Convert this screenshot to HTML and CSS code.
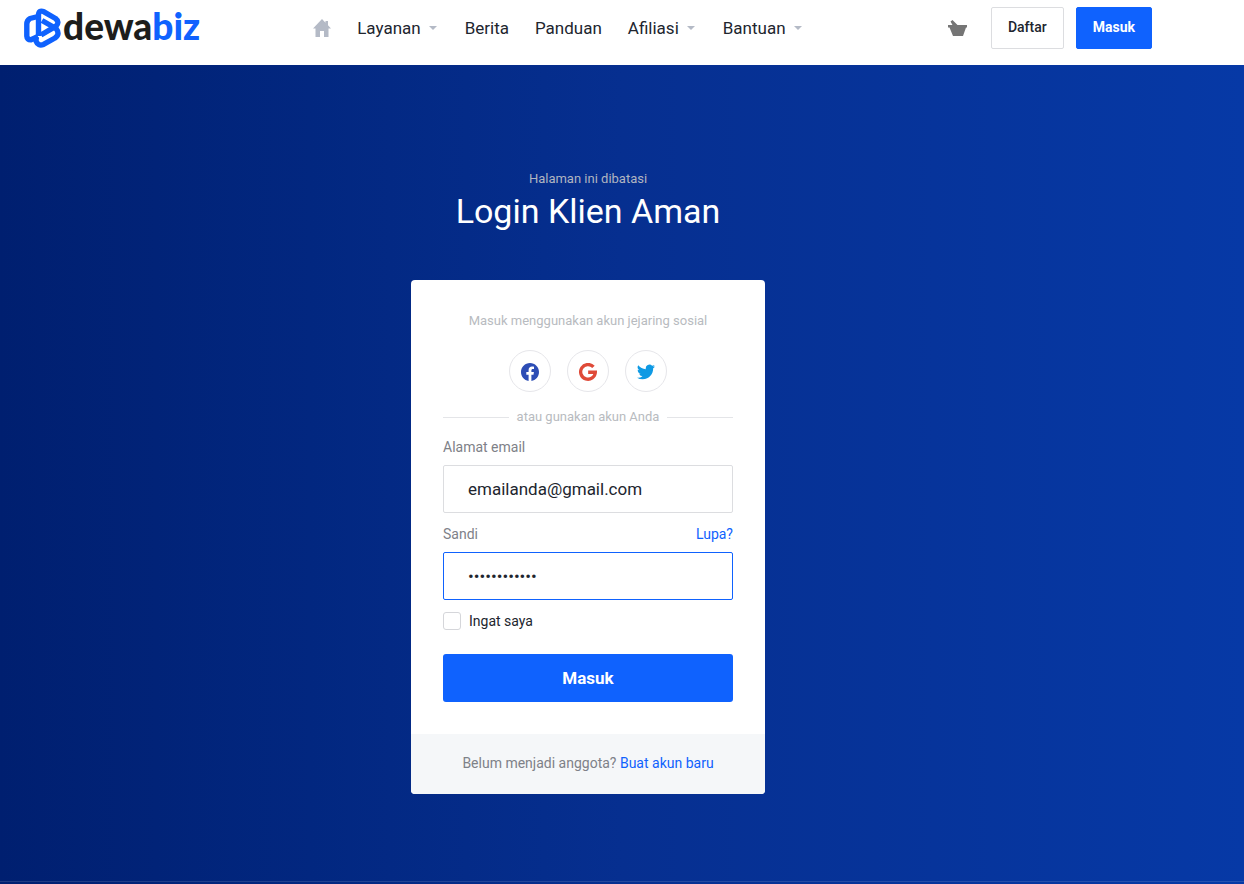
FILE: index.html
```html
<!DOCTYPE html>
<html lang="id">
<head>
<meta charset="utf-8">
<meta name="viewport" content="width=device-width, initial-scale=1">
<title>Login Klien Aman</title>
<link rel="stylesheet" href="styles.css">
</head>
<body>
<header class="header">
  <a class="logo" href="#">
    <svg class="logo-mark" viewBox="0 0 38 40" aria-hidden="true">
      <g fill="none" stroke="#0f62fe" stroke-width="5.400" stroke-linejoin="round">
        <path d="M14.500 28V7.500Q14.500 1.500 20 3.800L31.500 10.500Q36 14 32 18.200L17 27"/>
        <path d="M14 8.500L6 10.500Q2.800 12.500 2.800 16V28Q3 32 7 31.800L14 28.500"/>
        <path d="M12 29V33Q14 38.500 19.500 36.400L31 30Q36.500 26 32 20.500L18 12.500"/>
      </g>
    </svg>
    <span class="logo-text">dewa<span class="logo-accent">biz</span></span>
  </a>
  <nav class="nav">
    <a href="#" aria-label="Beranda"><svg class="home" viewBox="0 0 18 18" aria-hidden="true"><path fill="#b4bac6" d="M9 0L0 9.500h2.500V18h4.500v-6h4v6h4.500V9.500H18L15 6.300V2h-2.500v1.700z"/></svg></a>
    <a class="has-menu" href="#">Layanan</a>
    <a href="#">Berita</a>
    <a href="#">Panduan</a>
    <a class="has-menu" href="#">Afiliasi</a>
    <a class="has-menu" href="#">Bantuan</a>
  </nav>
  <div class="actions">
    <a class="cart" href="#" aria-label="Keranjang"><svg viewBox="0 0 19 17" aria-hidden="true"><path fill="#757575" d="M0 5h4.500L2.500 1.500L4.500 0L9.500 5H19v2.500h-1L15 16H5L1.500 7.500H0z"/></svg></a>
    <button class="btn btn-outline" type="button">Daftar</button>
    <button class="btn btn-primary" type="button">Masuk</button>
  </div>
</header>
<main class="hero">
  <p class="hint">Halaman ini dibatasi</p>
  <h1 class="title">Login Klien Aman</h1>
  <section class="card">
    <form class="form">
      <p class="social-title">Masuk menggunakan akun jejaring sosial</p>
      <div class="socials">
        <button class="social" type="button" aria-label="Facebook"><svg viewBox="0 0 24 24" aria-hidden="true"><path fill="#2d4db5" d="M24 12.070C24 5.400 18.630 0 12 0S0 5.400 0 12.070C0 18.100 4.390 23.090 10.130 24v-8.440H7.080v-3.490h3.050V9.410c0-3.020 1.790-4.690 4.530-4.690 1.310 0 2.680.240 2.680.240v2.970h-1.510c-1.490 0-1.960.930-1.960 1.890v2.250h3.330l-.530 3.490h-2.800V24C19.610 23.090 24 18.100 24 12.070z"/></svg></button>
        <button class="social" type="button" aria-label="Google"><svg viewBox="0 0 24 24" aria-hidden="true"><path fill="none" stroke="#df4a38" stroke-width="4.400" d="M19.300 5.300A9.800 9.800 0 1 0 21.800 12.300H12.200"/></svg></button>
        <button class="social" type="button" aria-label="Twitter"><svg viewBox="0 0 24 24" aria-hidden="true"><path fill="#0f9ae4" d="M23.950 4.570a10 10 0 0 1-2.820.770 4.960 4.960 0 0 0 2.160-2.720c-.950.550-2 .950-3.130 1.180a4.920 4.920 0 0 0-8.380 4.480C7.690 8.090 4.070 6.130 1.640 3.160a4.920 4.920 0 0 0 1.520 6.570 4.900 4.900 0 0 1-2.230-.610v.060a4.920 4.920 0 0 0 3.950 4.830 5 5 0 0 1-2.210.080 4.940 4.940 0 0 0 4.600 3.420A9.870 9.870 0 0 1 0 19.540a13.990 13.990 0 0 0 7.550 2.210c9.050 0 14-7.500 14-13.980 0-.210 0-.420-.020-.630a9.940 9.940 0 0 0 2.460-2.550z"/></svg></button>
      </div>
      <p class="divider">atau gunakan akun Anda</p>
      <label class="label" for="email">Alamat email</label>
      <input class="field" id="email" type="email" value="emailanda@gmail.com">
      <div class="label-row">
        <label class="label" for="password">Sandi</label>
        <a class="link" href="#">Lupa?</a>
      </div>
      <input class="field field-active" id="password" type="password" value="rahasiaku123">
      <label class="remember"><input class="check" type="checkbox">Ingat saya</label>
      <button class="submit" type="submit">Masuk</button>
    </form>
    <p class="card-footer">Belum menjadi anggota? <a class="link" href="#">Buat akun baru</a></p>
  </section>
</main>
<footer class="footer"></footer>
</body>
</html>
```
FILE: styles.css
```css
* { box-sizing: border-box; }

body {
  margin: 0;
  min-height: 100vh;
  display: flex;
  flex-direction: column;
  background: linear-gradient(90deg, #001f70, #022780 25%, #062f90 50%, #0639a6);
  color: #21252e;
  font: 14px/20px Roboto, "Liberation Sans", sans-serif;
}

a { color: inherit; text-decoration: none; }
p, h1 { margin: 0; font-weight: 400; }
button, input { font: inherit; }
button { cursor: pointer; }
svg { display: block; }

.header {
  display: flex;
  align-items: center;
  padding: 7px 92px 16px 24px;
  background: #fff;
}

.logo { display: flex; align-items: center; gap: 1px; }
.logo-mark { width: 38px; height: 40px; }
.logo-text { padding-bottom: 4px; font: 900 37px/36px Lato, sans-serif; color: #1d1d1b; }
.logo-accent { color: #0f62fe; }

.nav {
  display: flex;
  align-items: center;
  gap: 26px;
  margin-left: 113px;
  font-size: 17px;
  line-height: 24px;
}
.home { width: 18px; height: 18px; }
.has-menu { display: flex; align-items: center; gap: 8px; padding-right: 2px; }
.has-menu::after {
  content: "";
  border: 4px solid transparent;
  border-top-color: #b4bac6;
  border-bottom: 0;
}

.actions { display: flex; align-items: center; gap: 12px; margin-left: auto; }
.cart { width: 19px; margin-right: 12px; }
.btn {
  height: 42px;
  padding: 0 16px 2px;
  border: 1px solid #dcdde0;
  border-radius: 2px;
  background: #fff;
  color: #21252e;
  font-weight: 500;
}
.btn-primary { border-color: #0f62fe; background: #0f62fe; color: #fff; font-weight: 700; }

.hero {
  flex: 1;
  display: flex;
  flex-direction: column;
  align-items: center;
  padding: 104px 68px 87px 0;
}
.hint { font-size: 13px; color: #b0b5c0; }
.title { margin-top: 2px; font-size: 34px; line-height: 40px; color: #fff; }

.card {
  width: 100%;
  max-width: 354px;
  margin-top: 49px;
  border-radius: 4px;
  background: #fff;
  overflow: hidden;
}
.form { display: flex; flex-direction: column; padding: 31px 32px 32px; }
.social-title, .divider { font-size: 13px; color: #b8bbc0; text-align: center; }
.socials { display: flex; justify-content: center; gap: 16px; margin: 19px 0 15px; }
.social {
  display: grid;
  place-items: center;
  width: 42px;
  height: 42px;
  padding: 2px 0 0;
  border: 1px solid #e6e6ea;
  border-radius: 50%;
  background: #fff;
}
.social svg { width: 18px; height: 18px; }
.divider { display: flex; align-items: center; gap: 8px; }
.divider::before, .divider::after { content: ""; flex: 1; height: 1px; background: #e4e5e8; }
.label, .label-row { color: #7e8188; }
.form > .label { margin-top: 10px; }
.label-row { display: flex; justify-content: space-between; margin-top: 11px; }
.link { color: #0f62fe; }
.field {
  width: 100%;
  height: 48px;
  margin-top: 8px;
  padding: 0 24px;
  border: 1px solid #dcdde0;
  border-radius: 2px;
  outline: 0;
  background: #fff;
  color: #21252e;
  font-size: 17px;
}
.field-active { border-color: #0f62fe; }
.remember { display: flex; align-items: center; gap: 8px; margin-top: 11px; }
.check {
  appearance: none;
  width: 18px;
  height: 18px;
  margin: 0;
  border: 1px solid #d5d6da;
  border-radius: 3px;
  background: #fff;
}
.check:checked { background: #0f62fe; }
.submit {
  height: 48px;
  margin-top: 23px;
  border: 0;
  border-radius: 3px;
  background: #0f62fe;
  color: #fff;
  font-size: 17px;
  font-weight: 700;
}
.card-footer { padding: 19px 24px 21px; background: #f5f7f9; color: #7e8188; text-align: center; }
.footer { height: 3px; border-top: 1px solid rgba(255, 255, 255, 0.12); }
```
